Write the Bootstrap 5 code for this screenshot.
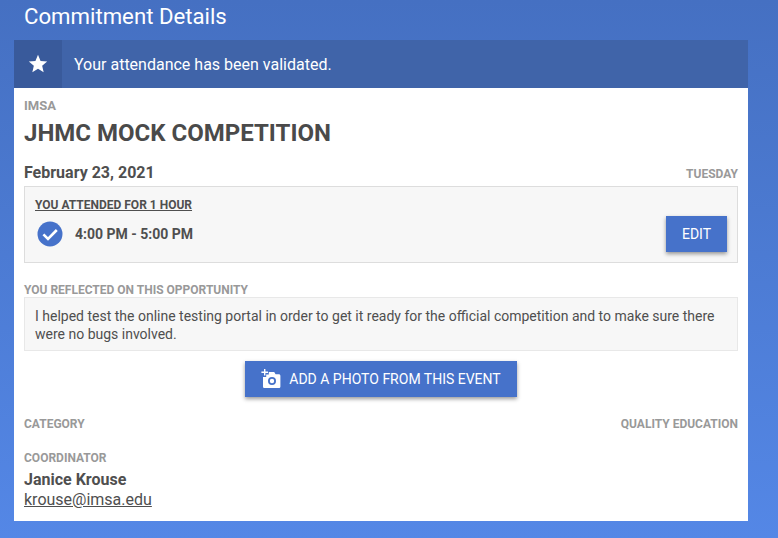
<!DOCTYPE html>
<html lang="en">
<head>
<meta charset="UTF-8">
<meta name="viewport" content="width=device-width, initial-scale=1.0">
<link href="https://cdn.jsdelivr.net/npm/bootstrap@5.3.0/dist/css/bootstrap.min.css" rel="stylesheet">
<style>
  html, body { height: 100%; }
  body {
    font-family: Roboto, "Liberation Sans", sans-serif;
    color: #4f4f4f;
    background: linear-gradient(180deg, #4570c2 0%, #5487e6 100%);
    overflow: hidden;
  }
  .page-wrap { padding: 0 30px 0 14px; }
  .page-title { font-size: 22.2px; font-weight: 400; line-height: 32px; height: 40px; margin: 0 0 0 10px; color: #fff; }
  .alert-bar { height: 48px; background: #4064a9; color: #fff; font-size: 16px; }
  .alert-star { width: 48px; height: 48px; background: #395a9b; }
  .alert-text { margin-left: 12px; font-weight: 400; padding-top: 2px; }
  .detail-body { background: #fff; padding: 9px 10px 11px; height: 433px; }
  .meta-label { font-size: 12px; font-weight: 700; color: #999; line-height: 18px; }
  .org-label { font-size: 13px; }
  .event-title { font-size: 24px; font-weight: 700; line-height: 32px; margin: 2px 0 0; color: #4a4a4a; }
  .date-row { margin-top: 12px; height: 25px; }
  .date-text { font-size: 16px; font-weight: 700; line-height: 22px; margin-bottom: 2px; }
  .attend-box { background: #f7f7f7; border: 1px solid #ddd; height: 77px; padding: 10px 10px 0; }
  .attend-head { font-size: 12px; font-weight: 700; text-decoration: underline; line-height: 17px; }
  .attend-time { font-size: 14px; font-weight: 700; margin-left: 12px; }
  .check-icon { margin-left: 2px; }
  .blue-btn {
    background: #4672ca; color: #fff; border: 0; border-radius: 0; font-size: 14px; font-weight: 400;
    box-shadow: 0 2px 4px rgba(0,0,0,.4);
  }
  .blue-btn:hover { background: #4672ca; color: #fff; }
  .edit-btn { width: 61px; height: 36px; padding: 0; }
  .attend-row { margin-top: 2px; }
  .reflect-label { margin-top: 20px; line-height: 14px; }
  .reflect-box { background: #f7f7f7; border: 1px solid #e8e8e8; font-size: 14px; line-height: 18px; padding: 9px 10px; height: 54px; }
  .photo-btn { width: 272px; height: 36px; padding: 0; margin-top: 10px; }
  .category-row { margin-top: 18px; }
  .coord-label { margin-top: 16px; }
  .coord-name { font-size: 16px; font-weight: 700; line-height: 20px; margin-top: 3px; }
  .coord-mail { font-size: 16px; line-height: 20px; color: #4f4f4f; display: table; }
</style>
<title>Commitment Details</title>
</head>
<body>
<div class="page-wrap">
  <h1 class="page-title">Commitment Details</h1>
  <div class="alert-bar d-flex align-items-center">
    <div class="alert-star d-flex align-items-center justify-content-center">
      <svg width="22" height="22" viewBox="0 0 24 24" fill="#fff"><path d="M12 17.27 18.18 21l-1.64-7.03L22 9.24l-7.19-.61L12 2 9.19 8.63 2 9.24l5.46 4.73L5.82 21z"/></svg>
    </div>
    <div class="alert-text">Your attendance has been validated.</div>
  </div>
  <div class="detail-body">
    <div class="meta-label org-label">IMSA</div>
    <h2 class="event-title">JHMC MOCK COMPETITION</h2>
    <div class="date-row d-flex justify-content-between align-items-center">
      <span class="date-text">February 23, 2021</span>
      <span class="meta-label">TUESDAY</span>
    </div>
    <div class="attend-box">
      <div class="attend-head">YOU ATTENDED FOR 1 HOUR</div>
      <div class="attend-row d-flex align-items-center justify-content-between">
        <div class="d-flex align-items-center">
          <svg class="check-icon" width="26" height="26" viewBox="0 0 26 26"><circle cx="13" cy="13" r="12.5" fill="#4672ca"/><path d="M6.4 13.4l4.6 4.6 8.8-9" fill="none" stroke="#fff" stroke-width="2.6"/></svg>
          <span class="attend-time">4:00 PM - 5:00 PM</span>
        </div>
        <button type="button" class="btn blue-btn edit-btn">EDIT</button>
      </div>
    </div>
    <div class="meta-label reflect-label">YOU REFLECTED ON THIS OPPORTUNITY</div>
    <div class="reflect-box">I helped test the online testing portal in order to get it ready for the official competition and to make sure there were no bugs involved.</div>
    <div class="text-center">
      <button type="button" class="btn blue-btn photo-btn d-inline-flex align-items-center justify-content-center gap-2">
        <svg width="20" height="20" viewBox="0 0 20 20" fill="#fff"><path d="M3 0h1.4v2.6H7V4H4.4v2.6H3V4H.4V2.6H3z"/><path fill-rule="evenodd" d="M7.8 3h5.4l1.4 2.2h3.2c.9 0 1.6.7 1.6 1.6v10.6c0 .9-.7 1.6-1.6 1.6H3.6c-.9 0-1.6-.7-1.6-1.6V8h3.2V5.4h2.6zM11 8a4 4 0 1 0 0 8 4 4 0 0 0 0-8zm0 1.8a2.2 2.2 0 1 1 0 4.4 2.2 2.2 0 0 1 0-4.4z"/></svg>
        <span>ADD A PHOTO FROM THIS EVENT</span>
      </button>
    </div>
    <div class="category-row d-flex justify-content-between">
      <span class="meta-label">CATEGORY</span>
      <span class="meta-label">QUALITY EDUCATION</span>
    </div>
    <div class="meta-label coord-label">COORDINATOR</div>
    <div class="coord-name">Janice Krouse</div>
    <a class="coord-mail" href="#">krouse@imsa.edu</a>
  </div>
</div>
<script src="https://cdn.jsdelivr.net/npm/bootstrap@5.3.0/dist/js/bootstrap.bundle.min.js"></script>
</body>
</html>
